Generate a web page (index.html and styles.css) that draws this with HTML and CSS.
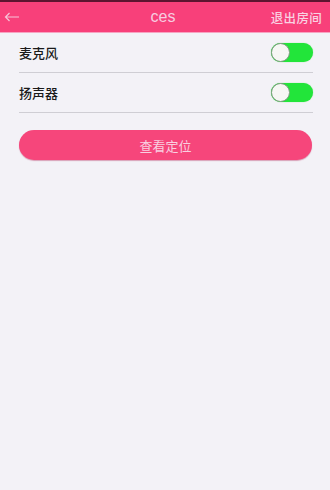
FILE: index.html
```html
<!DOCTYPE html>
<html>
<head>
<meta charset="utf-8">
<link rel="stylesheet" href="styles.css">
</head>
<body>
<div class="status"></div>
<header class="bar">
  <span class="back">
    <svg width="16" height="10" viewBox="0 0 16 10"><path d="M15 5H1.5M5.5 1L1.5 5l4 4" fill="none" stroke="#f6c4d8" stroke-width="1.2"/></svg>
  </span>
  <span class="title">ces</span>
  <span class="exit">退出房间</span>
</header>
<main class="content">
  <div class="row">
    <span class="label">麦克风</span>
    <span class="toggle"><span class="knob"></span></span>
  </div>
  <div class="row">
    <span class="label">扬声器</span>
    <span class="toggle"><span class="knob"></span></span>
  </div>
  <div class="btn">查看定位</div>
</main>
</body>
</html>
```
FILE: styles.css
```css
html, body {
  margin: 0;
  padding: 0;
}
body {
  width: 330px;
  height: 490px;
  background: #f3f2f7;
  font-family: "Noto Sans CJK SC", "Liberation Sans", sans-serif;
}
.status {
  height: 2px;
  background: #5e1430;
}
.bar {
  height: 30px;
  background: #f8407a;
  display: flex;
  align-items: center;
  justify-content: space-between;
  padding: 0 8px 0 4px;
  border-bottom: 1px solid #f7a4c2;
}
.back {
  display: flex;
  align-items: center;
  width: 60px;
}
.title {
  font-family: "Liberation Sans", sans-serif;
  font-size: 16px;
  color: #f7cde0;
}
.exit {
  width: 60px;
  text-align: right;
  font-size: 12.5px;
  font-weight: 500;
  color: #f9d2e2;
  letter-spacing: 0.3px;
}
.content {
  padding: 0 17px 0 19px;
}
.row {
  height: 39px;
  border-bottom: 1px solid #cfced4;
  display: flex;
  align-items: center;
  justify-content: space-between;
}
.label {
  font-size: 13px;
  font-weight: 500;
  color: #1a1a1a;
}
.toggle {
  width: 42px;
  height: 19px;
  border-radius: 10px;
  background: #22e53a;
  display: flex;
  align-items: center;
  box-shadow: 0 0 1px #6be06f;
}
.knob {
  width: 19px;
  height: 19px;
  box-sizing: border-box;
  border-radius: 50%;
  background: #f6f7f4;
  border: 1px solid #7f9a80;
}
.btn {
  margin: 17px 1px 0 0;
  height: 30px;
  border-radius: 15px;
  background: #f6467b;
  color: #f9cfe0;
  font-size: 13px;
  display: flex;
  align-items: center;
  justify-content: center;
  box-shadow: 0 1px 1px rgba(180, 40, 90, 0.4);
}
```
